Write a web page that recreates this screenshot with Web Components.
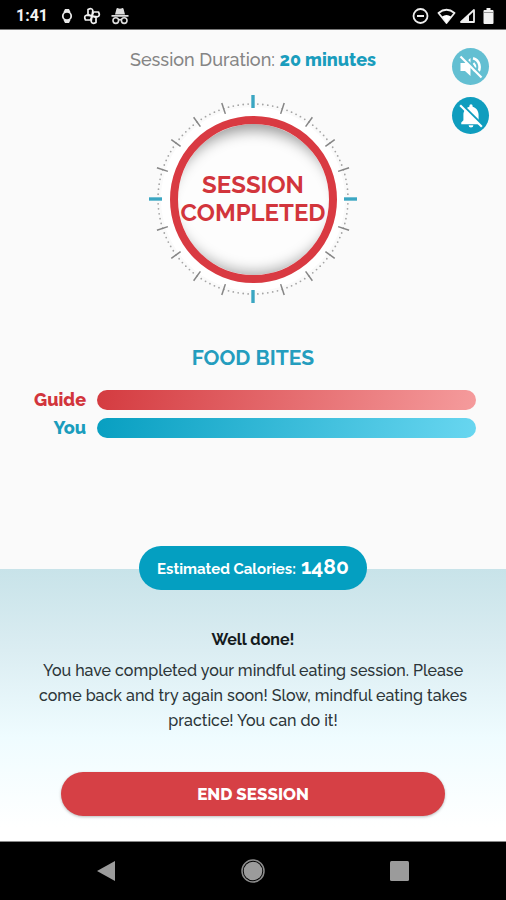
<!DOCTYPE html>
<html lang="en">
<head>
<meta charset="utf-8">
<meta name="viewport" content="width=device-width, initial-scale=1">
<title>Mindful eating session</title>
<style>
  body { margin: 0; font-family: Raleway, Lato, "Open Sans", sans-serif; background: #fafafa; }
</style>
</head>
<body>
<session-screen></session-screen>
<script>
function define(name, html, setup) {
  const template = document.createElement('template');
  template.innerHTML = html;
  customElements.define(name, class extends HTMLElement {
    constructor() {
      super();
      this.attachShadow({ mode: 'open' }).append(template.content.cloneNode(true));
    }
    connectedCallback() { if (setup) setup(this, this.shadowRoot); }
  });
}

define('status-bar', `
  <style>
    :host { display: flex; justify-content: space-between; align-items: center; height: 29px; padding: 0 12px 0 16px;
      background: #000; color: #f2f2f2; border-bottom: 1px solid #777; font: 700 16px/24px Roboto, sans-serif; }
    div { display: flex; align-items: center; padding-top: 2px; }
    .left { gap: 10px; } .left time { margin-right: 3px; }
    .right { gap: 3px; }
    svg { display: block; }
  </style>
  <div class="left">
    <time>1:41</time>
    <svg width="12" height="18" viewBox="0 0 12 18" fill="none" stroke="#e8e8e8"><circle cx="6" cy="9" r="4.2" stroke-width="1.8"/><path d="M2.500 5 4 2h4l1.500 3ZM2.500 13 4 16h4l1.500-3Z" fill="#e8e8e8" stroke="none"/></svg>
    <svg width="18" height="18" viewBox="0 0 18 18" fill="none" stroke="#f0f0f0" stroke-width="1.700" stroke-linejoin="round"><path d="M9 9 5 7.500V2.500Q9 .500 9.800 3.500Z"/><path d="M9 9 10.500 5h5Q17.500 9 14.500 9.800Z"/><path d="M9 9 13 10.500v5Q9 17.500 8.200 14.500Z"/><path d="M9 9 7.500 13h-5Q.500 9 3.500 8.200Z"/></svg>
    <svg width="18" height="18" viewBox="0 0 18 18"><path d="M4 7.500 5.500 1.800c.200-.700.800-.900 1.400-.600L9 1.800l2.100-.600c.600-.300 1.200-.1 1.400.600L14 7.500ZM.500 8h17v1.700H.500Z" fill="#ddd"/><g fill="none" stroke="#ddd" stroke-width="1.600"><circle cx="4.800" cy="13.600" r="2.800"/><circle cx="13.200" cy="13.600" r="2.800"/><path d="M7.500 13q1.500-1 3 0"/></g></svg>
  </div>
  <div class="right">
    <svg width="17" height="18" viewBox="0 0 17 18" fill="none" stroke="#eee" stroke-width="1.800"><circle cx="8.500" cy="9" r="7"/><path d="M5 9h7" stroke-width="2"/></svg>
    <svg style="margin-left:5px" width="19" height="18" viewBox="0 0 19 18"><path d="M1.500 6Q9.500-.500 17.500 6L9.500 16Z" fill="none" stroke="#eee" stroke-width="1.800" stroke-linejoin="round"/><path d="M5 9.500q4.500-3 9 0L9.500 16Z" fill="#fff"/></svg>
    <svg width="17" height="18" viewBox="0 0 17 18"><path d="M15 3v12H2Z" fill="none" stroke="#eee" stroke-width="1.800" stroke-linejoin="round"/><path d="M2 15 10 7.500V15Z" fill="#eee"/></svg>
    <svg style="margin-left:4px" width="11" height="18" viewBox="0 0 11 18"><path d="M3.500 1h4v2h2q1 0 1 1v12q0 1-1 1h-8q-1 0-1-1V4q0-1 1-1h2Z" fill="#f2f2f2"/><path d="M1 5.500h9" stroke="#999"/></svg>
  </div>`);

define('round-toggle', `
  <style>
    :host { display: block; }
    button { display: grid; place-items: center; width: 37px; height: 37px; padding: 0; border: 0; border-radius: 50%;
      background: var(--tone, #0f9dbe); color: #fff; cursor: pointer; }
  </style>
  <button type="button"><slot></slot></button>`,
  (el, root) => root.querySelector('button').setAttribute('aria-label', el.getAttribute('label')));

define('session-dial', `
  <style>
    :host { display: grid; justify-items: center; align-items: center; color: #d2353c; }
    svg, .face, .text { grid-area: 1 / 1; }
    svg { width: 212px; height: 212px; }
    .face { box-sizing: border-box; width: 167px; height: 167px; border: 8px solid #d93a42; border-radius: 50%; background: #fdfdfd;
      box-shadow: inset 0 20px 14px -14px #999, inset 0 -16px 13px -13px #aaa; }
    .text { text-align: center; font-size: 24px; font-weight: 700; line-height: 28px; text-transform: uppercase; }
  </style>
  <svg viewBox="-106 -106 212 212" aria-hidden="true">
    <circle r="92" fill="#fff"/>
    <circle r="95" fill="none" stroke="#a5a5a5" stroke-width="1.800" stroke-linecap="round" pathLength="120" stroke-dasharray="0 1"/>
    <g class="ticks"></g>
  </svg>
  <div class="face"></div>
  <div class="text"><slot></slot></div>`,
  (el, root) => {
    let ticks = '';
    for (let a = 0; a < 360; a += 18) {
      ticks += a % 90
        ? `<path d="M0-101V-89.500" stroke="#858585" stroke-width="1.500" transform="rotate(${a})"/>`
        : `<path d="M0-104V-91" stroke="#3ba6c2" stroke-width="3.400" transform="rotate(${a})"/>`;
    }
    root.querySelector('.ticks').innerHTML = ticks;
  });

define('bite-bar', `
  <style>
    :host { display: grid; grid-template-columns: 86px 1fr; column-gap: 11px; align-items: center; padding-right: 30px;
      color: var(--ink); font-size: 18px; font-weight: 800; line-height: 20px; }
    .label { text-align: right; }
    .bar { height: 20px; border-radius: 10px; background: linear-gradient(100deg, var(--from), var(--to)); }
  </style>
  <span class="label"><slot></slot></span><div class="bar"></div>`);

define('calorie-pill', `
  <style>
    :host { display: flex; align-items: baseline; justify-content: center; gap: 5px; box-sizing: border-box; width: 228px; height: 44px; border-radius: 22px;
      background: #049fc1; color: #fff; font-size: 15px; font-weight: 700; line-height: 42px; white-space: nowrap; }
    b { font-size: 21px; font-weight: 700; }
  </style>
  <span><slot></slot></span><b><slot name="value"></slot></b>`);

define('pill-button', `
  <style>
    :host { display: block; }
    button { display: block; width: 100%; height: 44px; border: 0; border-radius: 22px; background: #d64045; color: #fff;
      font: inherit; font-size: 17px; font-weight: 800; line-height: 24px; box-shadow: 0 1px 3px #0004; cursor: pointer; }
  </style>
  <button type="button"><slot></slot></button>`);

define('nav-bar', `
  <style>
    :host { display: grid; grid-template-columns: repeat(3, 1fr); align-items: center; height: 58px; padding: 0 34px;
      background: #000; border-top: 1px solid #888; }
    button { display: grid; place-items: center; justify-self: center; width: 40px; height: 40px; padding: 0; border: 0; background: none; }
  </style>
  <button type="button" aria-label="Back"><svg width="24" height="24"><path d="M20 2v20L2 12Z" fill="#9b9b9b"/></svg></button>
  <button type="button" aria-label="Home"><svg width="24" height="24"><circle cx="12" cy="12" r="11" fill="none" stroke="#8c8c8c" stroke-width="1.500"/><circle cx="12" cy="12" r="9.300" fill="#9b9b9b"/></svg></button>
  <button type="button" aria-label="Recent apps"><svg width="24" height="24"><rect x="3" y="2" width="19" height="20" rx="1.500" fill="#9b9b9b"/></svg></button>`);

define('session-screen', `
  <style>
    :host { display: flex; flex-direction: column; min-height: 100vh; }
    main { flex: 1; display: flex; flex-direction: column; }
    .top { display: grid; grid-template-columns: 37px 1fr 37px; padding: 16px 17px 0; }
    .center { grid-column: 2; }
    .duration { margin: 2px 0 21px; text-align: center; color: #858585; font-size: 18px; font-weight: 500; line-height: 24px; white-space: nowrap; }
    .duration strong { color: #1a9dbd; font-weight: 800; }
    .toggles { display: flex; flex-direction: column; gap: 12px; padding-top: 2px; }
    h1 { margin: 39px 0 18px; text-align: center; color: #249dbe; font-size: 21px; font-weight: 700; line-height: 28px; }
    .bars { display: grid; gap: 8px; }
    .result { flex: 1; display: flex; flex-direction: column; align-items: center; margin-top: 131px; color: #2c3538;
      background: linear-gradient(#c8e3e9, #dbedf2 30%, #effcff 62%, #fff 95%); }
    calorie-pill { margin-top: -23px; }
    h2 { margin: 38px 0 6px; color: #151b1e; font-size: 16px; font-weight: 700; line-height: 24px; }
    p { margin: 0; padding: 0 30px; text-align: center; font-size: 16px; font-weight: 500; line-height: 25px; }
    pill-button { align-self: stretch; margin: 39px 61px 25px; }
  </style>
  <status-bar></status-bar>
  <main>
    <section class="top">
      <div class="center">
        <div class="duration">Session Duration: <strong>20 minutes</strong></div>
        <session-dial><span>Session<br>Completed</span></session-dial>
      </div>
      <div class="toggles">
        <round-toggle label="Sound off" style="--tone:#63bfd2">
          <svg width="24" height="24" viewBox="0 0 24 24" fill="currentColor"><path d="M1.500 8H6l5.500-5v18L6 16H1.500Z"/><path d="M14.500 8q3.500 4 0 8" fill="none" stroke="currentColor" stroke-width="2"/><path d="M14 3.200a9 9 0 0 1 4 15" fill="none" stroke="currentColor" stroke-width="2.600"/><path d="M3.500 1.500 23 21" stroke="#63bfd2" stroke-width="3"/><path d="M1.500 1.500 22.500 22.500" stroke="currentColor" stroke-width="2.200"/></svg>
        </round-toggle>
        <round-toggle label="Notifications off">
          <svg width="26" height="26" viewBox="0 0 24 24" fill="currentColor"><path d="M10.500 3.500V2.700a1.500 1.500 0 0 1 3 0v.800C17 4.500 19 7.500 19 11v5l2 2v1.500H3V18l2-2v-5c0-3.500 2-6.500 5.500-7.500ZM9.800 20.500h4.400a2.200 2.200 0 0 1-4.400 0Z"/><path d="M3.500 1.500 23 21" stroke="#0f9dbe" stroke-width="2.600"/><path d="M2 2 22 22" stroke="currentColor" stroke-width="2"/></svg>
        </round-toggle>
      </div>
    </section>
    <h1>FOOD BITES</h1>
    <div class="bars">
      <bite-bar style="--ink:#d2353c;--from:#d43b40;--to:#f59b9c">Guide</bite-bar>
      <bite-bar style="--ink:#1a9dbd;--from:#089fc1;--to:#68d6f0">You</bite-bar>
    </div>
    <section class="result">
      <calorie-pill>Estimated Calories:<span slot="value">1480</span></calorie-pill>
      <h2>Well done!</h2>
      <p>You have completed your mindful eating session. Please come back and try again soon! Slow, mindful eating takes practice! You can do it!</p>
      <pill-button>END SESSION</pill-button>
    </section>
  </main>
  <nav-bar></nav-bar>`);
</script>
</body>
</html>
